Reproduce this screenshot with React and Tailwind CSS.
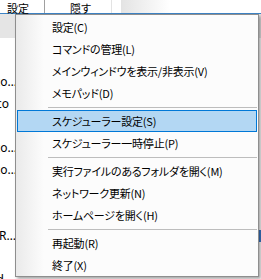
export default function App() {
  const items = [
    { t: '設定(C)' },
    { t: 'コマンドの管理(L)' },
    { t: 'メインウィンドウを表示/非表示(V)' },
    { t: 'メモパッド(D)' },
    'sep',
    { t: 'スケジューラー設定(S)', hl: true },
    { t: 'スケジューラー一時停止(P)' },
    'sep',
    { t: '実行ファイルのあるフォルダを開く(M)' },
    { t: 'ネットワーク更新(N)' },
    { t: 'ホームページを開く(H)' },
    'sep',
    { t: '再起動(R)' },
    { t: '終了(X)' },
  ];

  const rows = [
    { left: 'co…', w: 'w-[17px]' },
    { left: 'co', w: 'w-[9px]' },
    {},
    { left: 'co…', w: 'w-[17px]' },
    { left: 'co…', w: 'w-[17px]' },
    {},
    {},
    { left: 'R…', w: 'w-[16px]', blue: true },
    {},
    { left: 'd', w: 'w-[4px]' },
  ];

  return (
    <div className="relative w-[261px] h-[279px] overflow-hidden bg-white text-black text-[11px] font-['Noto_Sans_CJK_JP',sans-serif]">
      {/* list header */}
      <div className="flex h-[13px]">
        <div className="w-[45px] shrink-0 border-r border-[#a0a0a0] pl-[7px] pt-[2px] leading-[12px] [font-feature-settings:'palt']">設定</div>
        <div className="w-[67px] shrink-0 border-r border-[#e3e3e3] pl-[25px] pt-[2px] leading-[12px] [font-feature-settings:'palt']">隠す</div>
        <div className="w-[10px] shrink-0 border-r border-[#e3e3e3]" />
        <div className="w-[48px] shrink-0 bg-gradient-to-r from-[#e4e4e4] to-white" />
        <div className="flex-1" />
      </div>
      {/* selected row */}
      <div className="h-[25px] border-t border-[#3d84c6] bg-[#e5e5e5]" />
      <div className="h-[33px]" />
      {rows.map((r, i) => (
        <div key={i} className="h-[22px] flex items-center font-['Noto_Sans',sans-serif] text-[12px]">
          {r.left ? (
            <div className={`${r.w} overflow-hidden flex justify-end whitespace-nowrap`}>
              <span className="shrink-0">{r.left}</span>
            </div>
          ) : null}
          {r.blue ? <div className="ml-auto w-[2px] h-[12px] bg-[#3a78c9]" /> : null}
        </div>
      ))}

      {/* context menu */}
      <div className="absolute left-[15px] top-[14px] w-[244px] h-[263px] border border-[#8e8e8e] bg-[linear-gradient(to_right,#eaeaea_0px,#fcfcfc_28px)] shadow-[2px_2px_3px_rgba(0,0,0,0.35)] pt-[1px] tracking-[-0.2px] [font-feature-settings:'palt']">
        {items.map((it, i) =>
          it === 'sep' ? (
            <div key={i} className="h-[6px] pt-[3px] pl-[32px] pr-[1px]">
              <div className="h-px bg-[#bdbdbd]" />
            </div>
          ) : (
            <div
              key={i}
              className={`mx-[1px] h-[22px] flex items-center pl-[34px] border leading-none whitespace-nowrap ${
                it.hl ? 'bg-[#b3d7f3] border-[#0078d7]' : 'border-transparent'
              }`}
            >
              {it.t}
            </div>
          )
        )}
      </div>
    </div>
  );
}
